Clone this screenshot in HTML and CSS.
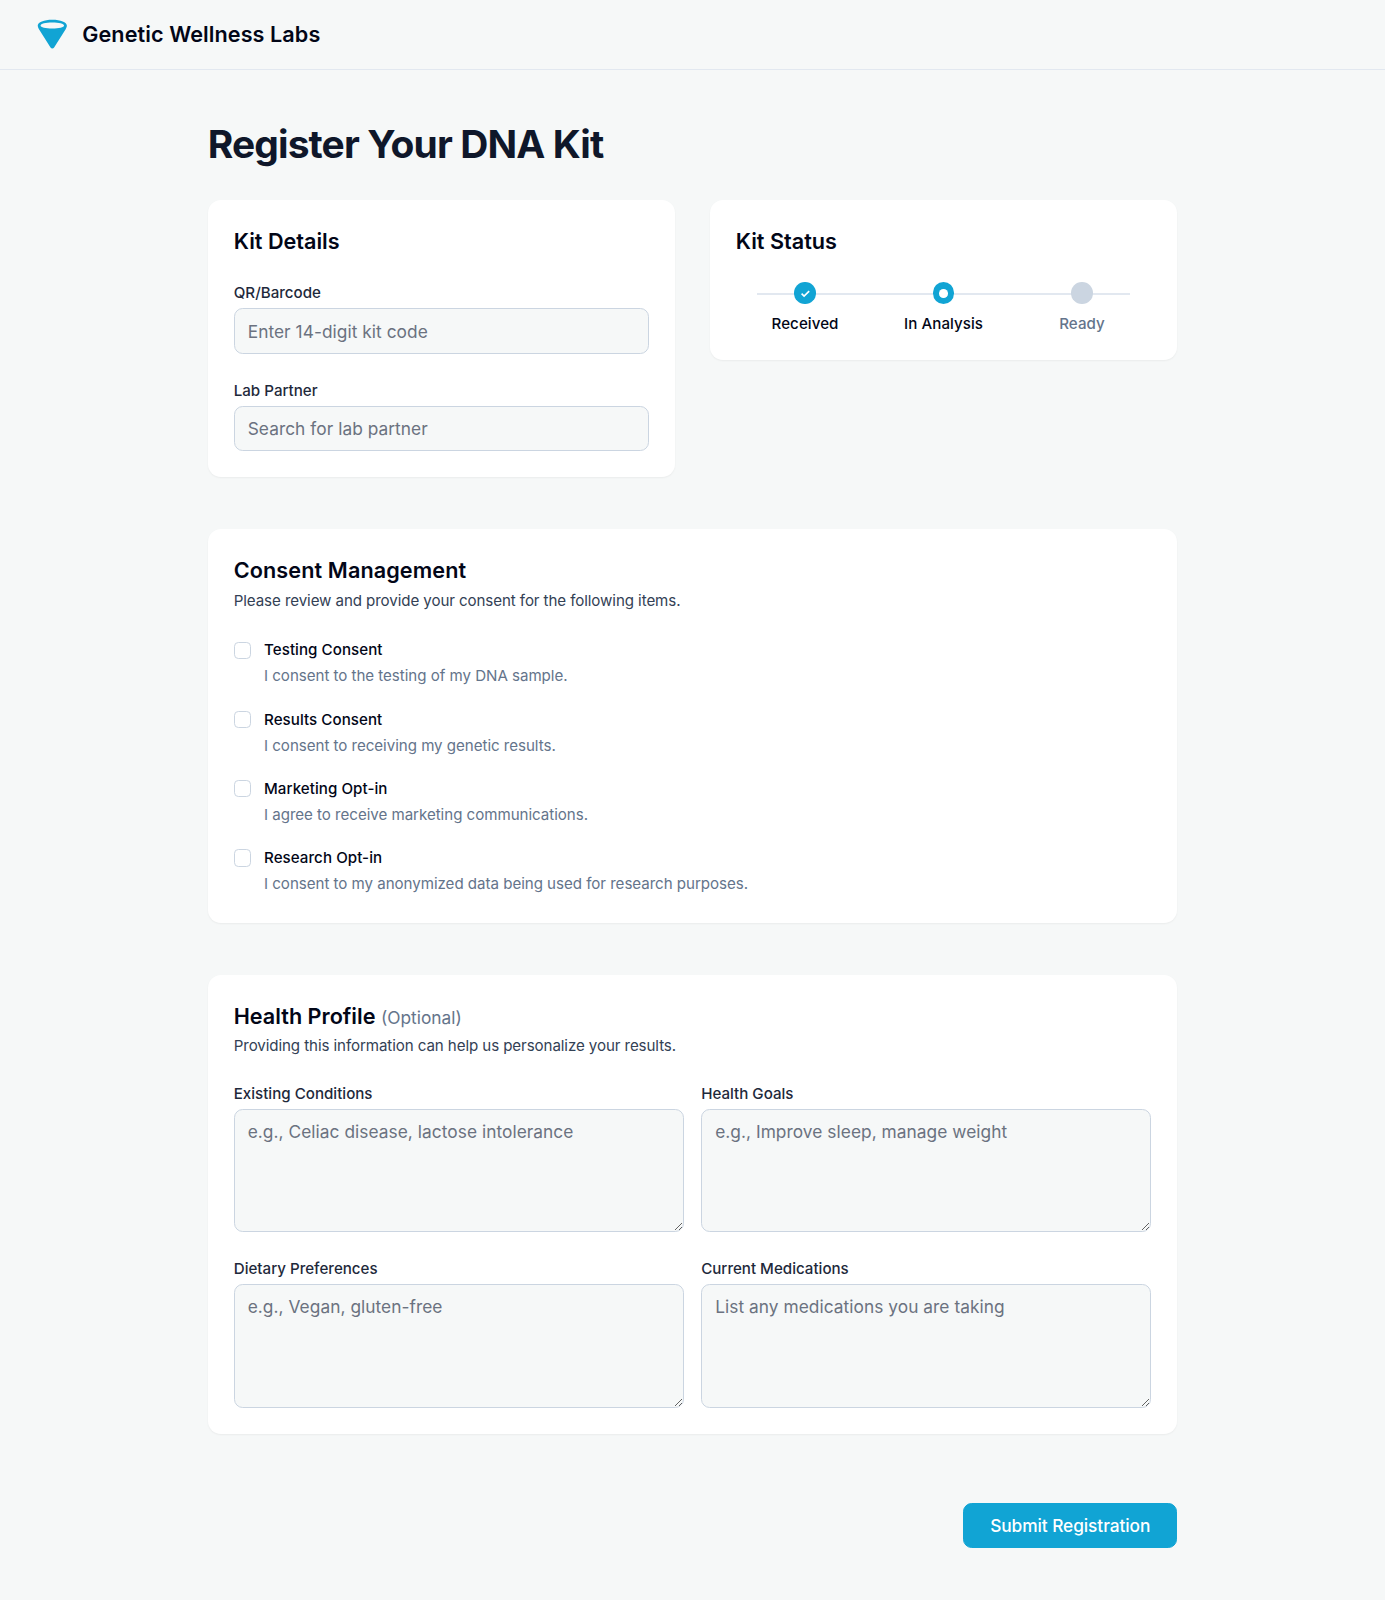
FILE: index.html
```html
<!DOCTYPE html>
<html lang="en">
<head>
<meta charset="utf-8">
<title>Genetic Wellness Labs</title>
<link rel="stylesheet" href="styles.css">
</head>
<body>
<header class="site-header">
  <svg class="logo" viewBox="0 0 48 48" fill="none" aria-hidden="true">
    <path fill="currentColor" fill-rule="evenodd" d="M24 3.900C12.500 3.900 3.800 7.200 3.800 12.300C3.800 13.900 4.500 15.200 5.300 16.500L21.500 42.300C22.700 44.200 25.300 44.200 26.500 42.300L42.700 16.500C43.500 15.200 44.200 13.900 44.200 12.300C44.200 7.200 35.500 3.900 24 3.900ZM24 7.600C33.200 7.600 40.300 9.400 40.300 11.800C40.300 14.200 33.200 16.100 24 16.100C14.800 16.100 7.700 14.200 7.700 11.800C7.700 9.400 14.800 7.600 24 7.600Z"/>
  </svg>
  <span class="brand">Genetic Wellness Labs</span>
</header>
<main class="main">
  <h1 class="page-title">Register Your DNA Kit</h1>
  <form class="form">
    <div class="top-row">
      <section class="card">
        <h2 class="card-title">Kit Details</h2>
        <div class="fields">
          <label class="field"><span class="field-label">QR/Barcode</span><input class="control" type="text" placeholder="Enter 14-digit kit code"></label>
          <label class="field"><span class="field-label">Lab Partner</span><input class="control" type="text" placeholder="Search for lab partner"></label>
        </div>
      </section>
      <section class="card">
        <h2 class="card-title">Kit Status</h2>
        <ol class="steps">
          <li class="step">
            <span class="dot"><svg class="check" viewBox="0 0 12 12" fill="none" stroke="currentColor" stroke-width="1.5"><path d="M2.400 6.200L4.700 8.400L9.400 3.800"/></svg></span>
            <span class="step-label">Received</span>
          </li>
          <li class="step">
            <span class="dot"><span class="dot-core"></span></span>
            <span class="step-label">In Analysis</span>
          </li>
          <li class="step step-pending">
            <span class="dot"></span>
            <span class="step-label">Ready</span>
          </li>
        </ol>
      </section>
    </div>

    <section class="card">
      <h2 class="card-title card-title-wide">Consent Management</h2>
      <p class="card-note">Please review and provide your consent for the following items.</p>
      <div class="consents">
        <label class="consent"><input class="checkbox" type="checkbox"><span class="consent-text"><span class="consent-name">Testing Consent</span><span class="consent-desc">I consent to the testing of my DNA sample.</span></span></label>
        <label class="consent"><input class="checkbox" type="checkbox"><span class="consent-text"><span class="consent-name">Results Consent</span><span class="consent-desc">I consent to receiving my genetic results.</span></span></label>
        <label class="consent"><input class="checkbox" type="checkbox"><span class="consent-text"><span class="consent-name">Marketing Opt-in</span><span class="consent-desc">I agree to receive marketing communications.</span></span></label>
        <label class="consent"><input class="checkbox" type="checkbox"><span class="consent-text"><span class="consent-name">Research Opt-in</span><span class="consent-desc">I consent to my anonymized data being used for research purposes.</span></span></label>
      </div>
    </section>

    <section class="card">
      <h2 class="card-title">Health Profile <span class="optional">(Optional)</span></h2>
      <p class="card-note">Providing this information can help us personalize your results.</p>
      <div class="profile">
        <label class="field"><span class="field-label">Existing Conditions</span><textarea class="control" rows="4" placeholder="e.g., Celiac disease, lactose intolerance"></textarea></label>
        <label class="field"><span class="field-label">Health Goals</span><textarea class="control" rows="4" placeholder="e.g., Improve sleep, manage weight"></textarea></label>
        <label class="field"><span class="field-label">Dietary Preferences</span><textarea class="control" rows="4" placeholder="e.g., Vegan, gluten-free"></textarea></label>
        <label class="field"><span class="field-label">Current Medications</span><textarea class="control" rows="4" placeholder="List any medications you are taking"></textarea></label>
      </div>
    </section>

    <div class="actions"><button class="submit" type="submit">Submit Registration</button></div>
  </form>
</main>
</body>
</html>
```
FILE: styles.css
```css
*, *::before, *::after { box-sizing: border-box; }

html { font-size: 17.3125px; }

body {
  margin: 0;
  min-height: 100vh;
  background: #f6f8f8;
  color: #020617;
  font-family: Inter, "Liberation Sans", sans-serif;
  line-height: 1.5;
}

h1, h2, p, ol { margin: 0; padding: 0; }

.site-header {
  display: flex;
  align-items: center;
  gap: 0.75rem;
  height: 4.0625rem;
  padding: 0 2rem;
  border-bottom: 1px solid #e2e8f0;
}
.logo { width: 2rem; height: 2rem; color: #11a4d4; }
.brand {
  padding-bottom: 0.0625rem;
  font-size: 1.25rem;
  line-height: 1.6875rem;
  font-weight: 600;
  letter-spacing: 0.07px;
}

.main { width: 56rem; margin: 0 auto; padding: 3rem 0; }
.page-title {
  margin-bottom: 2rem;
  font-size: 2.25rem;
  line-height: 2.5rem;
  font-weight: 700;
  letter-spacing: -0.0225em;
  color: #0f172a;
}

.form { display: flex; flex-direction: column; gap: 3rem; }
.top-row { display: grid; grid-template-columns: 1fr 1fr; align-items: start; gap: 2rem; }

.card {
  padding: 1.5rem;
  border-radius: 0.75rem;
  background: #fff;
  box-shadow: 0 1px 2px rgba(0, 0, 0, 0.05);
}
.card-title { font-size: 1.25rem; line-height: 1.75rem; font-weight: 600; }
.card-title-wide { letter-spacing: 0.1px; }
.card-note {
  margin-top: 0.25rem;
  font-size: 0.875rem;
  line-height: 1.25rem;
  letter-spacing: -0.095px;
  color: #334155;
}
.optional { font-size: 1rem; line-height: 1; font-weight: 400; color: #64748b; }

.fields { display: grid; gap: 1.5rem; margin-top: 1.5rem; }
.profile { display: grid; grid-template-columns: 1fr 1fr; gap: 1.5rem 1rem; margin-top: 1.5rem; }
.field { display: flex; flex-direction: column; gap: 0.25rem; }
.field-label { font-size: 0.875rem; line-height: 1.25rem; font-weight: 500; color: #1e293b; }

.control {
  display: block;
  width: 100%;
  margin: 0;
  padding: 0.5rem 0.75rem;
  border: 1px solid #cbd5e1;
  border-radius: 0.5rem;
  background: #f6f8f8;
  color: #0f172a;
  font: inherit;
  letter-spacing: 0.05px;
}
input.control { height: 2.625rem; }
textarea.control { height: 7.125rem; resize: vertical; }
.control::placeholder { color: #6b7280; opacity: 1; }

.steps {
  position: relative;
  display: grid;
  grid-template-columns: repeat(3, 1fr);
  margin-top: 1.5rem;
  list-style: none;
}
.steps::before {
  content: "";
  position: absolute;
  top: 0.625rem;
  left: 1.25rem;
  right: 1.25rem;
  height: 0.125rem;
  background: #e2e8f0;
}
.step { position: relative; display: flex; flex-direction: column; align-items: center; gap: 0.5rem; }
.dot {
  display: flex;
  align-items: center;
  justify-content: center;
  width: 1.25rem;
  height: 1.25rem;
  border-radius: 50%;
  background: #11a4d4;
  color: #fff;
}
.check { width: 0.75rem; height: 0.75rem; }
.dot-core { width: 0.5rem; height: 0.5rem; border-radius: 50%; background: #fff; }
.step-label { font-size: 0.875rem; line-height: 1.25rem; font-weight: 500; letter-spacing: 0.05px; }
.step-pending .dot { background: #cbd5e1; }
.step-pending .step-label { color: #64748b; }

.consents { display: grid; gap: 1rem; margin-top: 1.5rem; }
.consent { display: flex; gap: 0.75rem; font-size: 0.875rem; line-height: 1.5rem; }
.checkbox {
  appearance: none;
  flex: none;
  width: 1rem;
  height: 1rem;
  margin: 0.25rem 0 0;
  border: 1px solid #cbd5e1;
  border-radius: 0.25rem;
  background: #fff;
}
.consent-text { display: flex; flex-direction: column; }
.consent-name { font-weight: 500; letter-spacing: 0.05px; }
.consent-desc { color: #64748b; letter-spacing: -0.04px; }

.actions { display: flex; justify-content: flex-end; padding-top: 1rem; }
.submit {
  height: 2.625rem;
  padding: 0 1.5rem;
  border: 1px solid #11a4d4;
  border-radius: 0.5rem;
  background: #11a4d4;
  color: #fff;
  font: inherit;
  font-weight: 500;
  letter-spacing: -0.07px;
}
```
